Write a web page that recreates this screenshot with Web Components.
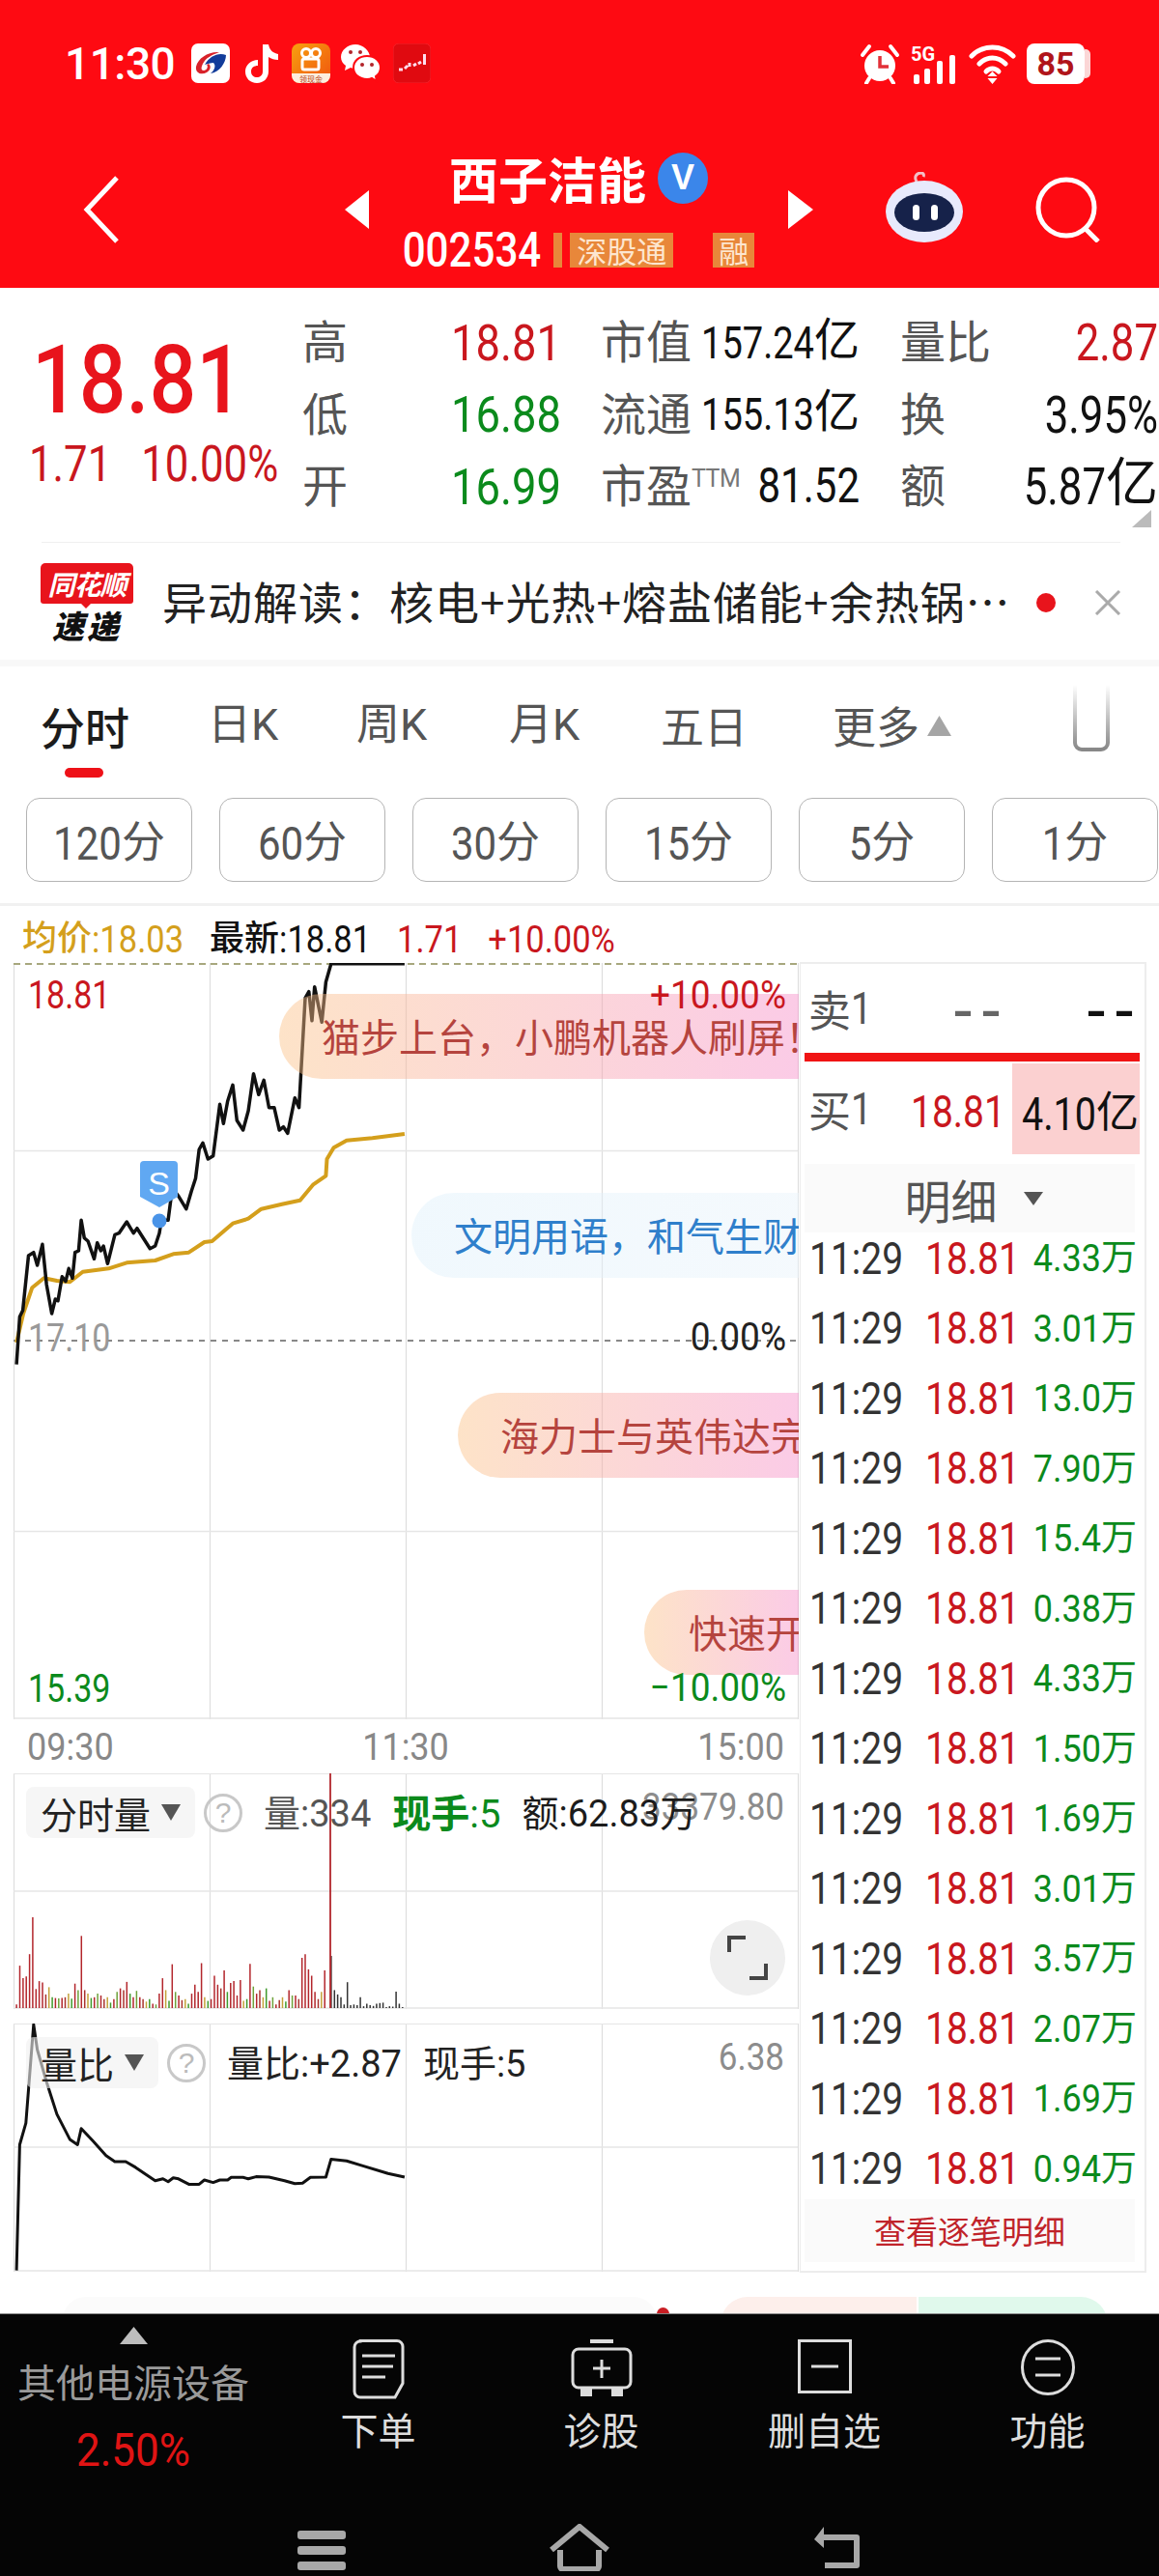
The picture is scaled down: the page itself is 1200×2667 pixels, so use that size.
<!DOCTYPE html>
<html lang="zh">
<head>
<meta charset="utf-8">
<title>西子洁能</title>
<style>
  html, body { margin: 0; padding: 0; background: #fff; }
  body { width: 1200px; height: 2667px; overflow: hidden; font-family: "Noto Sans CJK SC", sans-serif; }
  .main { display: flex; width: 1200px; }
  .left { width: 828px; flex: none; }
</style>
</head>
<body>
<stock-header></stock-header>
<quote-panel></quote-panel>
<news-ticker></news-ticker>
<period-tabs></period-tabs>
<interval-row></interval-row>
<div class="main">
  <div class="left">
    <chart-legend></chart-legend>
    <time-chart></time-chart>
    <axis-row></axis-row>
    <volume-panel></volume-panel>
    <ratio-panel></ratio-panel>
  </div>
  <order-panel></order-panel>
</div>
<peek-strip></peek-strip>
<bottom-dock></bottom-dock>

<script>
const CJK = `"Noto Sans CJK SC", sans-serif`;
const RED = '#c9171e', GREEN = '#0b8a1c', GOLD = '#d49f1c';

// the app's digit font is tall and thin, so digits get stretched upward
const NUM_CSS = `.n { display: inline-block; font-family: Roboto, sans-serif; font-weight: 400; font-size: var(--nf, .81em); transform: scaleY(var(--sy, 1.22)); }`;
const n = s => s.replace(/[\d.:+%−]+/g, m => `<span class="n">${m}</span>`);

class Base extends HTMLElement {
  connectedCallback() {
    if (!this.shadowRoot) this.attachShadow({ mode: 'open' });
    this.shadowRoot.innerHTML = `<style>${NUM_CSS}${this.css()}</style>${this.html()}`;
  }
  css() { return ':host{display:block}'; }
  html() { return ''; }
}

// zoom crops were not square, these put traced points back on the chart
const tracePts = (pts, sy, oy) => pts.map(([x, y]) => `${(x / 1.867).toFixed(1)},${(y / sy + oy).toFixed(1)}`).join(' ');

class StockHeader extends Base {
  css() { return `
    :host { display: block; background: #fe0a12; height: 298px; color: #fff; box-sizing: border-box; }
    .status { height: 157px; box-sizing: border-box; padding: 45px 70px 0 67px; display: flex; align-items: flex-start; }
    .time { font: 500 46px/42px Roboto, sans-serif; width: 111px; letter-spacing: -.5px; }
    svg { display: block; flex: none; }
    .right { margin-left: auto; display: flex; }
    .nav { height: 120px; display: flex; align-items: center; padding-left: 86px; }
    .mid { width: 434px; display: flex; flex-direction: column; align-items: center; }
    .title { display: flex; align-items: center; height: 54px; gap: 12px; font: 700 51px/54px ${CJK}; }
    .v { width: 52px; height: 53px; border-radius: 50%; background: #3b86ea; display: flex; align-items: center; justify-content: center;
         font: 800 36px/36px "Liberation Sans", sans-serif; }
    .code { display: flex; align-items: center; height: 37px; margin-top: 29px; font: 500 52px/37px ${CJK}; --sy: 1.2; }
    .code .n { font-weight: 500; }
    .tag { background: #e8873a; color: #fde6cf; font: 31px/36px ${CJK}; height: 36px; padding: 0 7px; white-space: nowrap; }
    .bar { width: 9px; height: 36px; background: #e8873a; margin: 0 8px 0 13px; }
  `; }
  html() { return `
    <div class="status">
      <div class="time">11:30</div>
      <svg width="40" height="41" viewBox="0 0 40 41" style="margin-left:20px"><rect width="40" height="41" rx="7" fill="#fff"/><path d="M29 9C18 8 7 15 5 24c-1 7 6 9 11 6 4-2 5-7 2-9l-2 1c2 2 0 6-3 6-3 0-3-3-1-7 3-6 9-9 17-12z" fill="#d8222a"/><path d="M14 22c5-9 14-13 22-10 0 8-7 18-16 19 4-3 6-8 3-11-3 0-6 1-9 2z" fill="#123c9a"/></svg>
      <svg width="36" height="41" viewBox="0 0 36 41" style="margin-left:15px"><path d="M19 1h6c1 6 5 9 10 10v6c-4 0-7-1-10-3v15c0 7-5 12-12 12C6 41 1 36 1 29s6-12 13-12v6c-4 0-7 2-7 6s3 6 6 6 6-2 6-6z" fill="#fff"/></svg>
      <svg width="40" height="41" viewBox="0 0 40 41" style="margin-left:13px"><defs><linearGradient id="ks" x1="0" y1="0" x2="1" y2="1"><stop offset="0" stop-color="#f8a10f"/><stop offset="1" stop-color="#f0530f"/></linearGradient></defs><rect width="40" height="41" rx="8" fill="url(#ks)"/><circle cx="15" cy="10" r="4.5" fill="none" stroke="#fff" stroke-width="3"/><circle cx="25" cy="10" r="4.5" fill="none" stroke="#fff" stroke-width="3"/><rect x="11" y="16" width="17" height="11" rx="2" fill="none" stroke="#fff" stroke-width="3"/><path d="M0 31h40v2a8 8 0 0 1-8 8H8a8 8 0 0 1-8-8z" fill="#fdeedd"/><text x="20" y="40" font-size="8" text-anchor="middle" fill="#b5451a" font-family="Noto Sans CJK SC">领现金</text></svg>
      <svg width="41" height="41" viewBox="0 0 41 41" style="margin-left:11px"><path d="M15 1C7 1 0 7 0 14c0 4 2 7 5 9l-1 5 6-3c2 1 4 1 6 1 8 0 14-6 14-12S23 1 15 1z" fill="#fff"/><path d="M27 13c-8 0-14 5-14 12s6 12 14 12c2 0 3 0 5-1l5 3-1-5c3-2 5-5 5-9 0-7-6-12-14-12z" fill="#fff" stroke="#fe0a12" stroke-width="2"/><circle cx="10" cy="9" r="2" fill="#b3242a"/><circle cx="20" cy="9" r="2" fill="#b3242a"/><circle cx="22" cy="22" r="2" fill="#b3242a"/><circle cx="32" cy="22" r="2" fill="#b3242a"/></svg>
      <svg width="39" height="41" viewBox="0 0 39 41" style="margin-left:13px"><rect width="39" height="41" rx="6" fill="#e00a10" stroke="#f4222a"/><path d="M6 27h4M12 26l3-3M17 24v-4M21 23l3-2M26 21l3-2" stroke="#fde" stroke-width="3" fill="none"/><rect x="31" y="11" width="3" height="11" fill="#fde"/></svg>
      <div class="right">
        <svg width="42" height="42" viewBox="0 0 42 42"><path d="M3 12 10 3M39 12 32 3" stroke="#fff" stroke-width="4" stroke-linecap="round"/><path d="M10 36 7 41M32 36l3 5" stroke="#fff" stroke-width="4" stroke-linecap="round"/><circle cx="21" cy="23" r="16" fill="#fff"/><path d="M21 13v11h9" stroke="#e23038" stroke-width="3.5" fill="none"/></svg>
        <svg width="47" height="42" viewBox="0 0 47 42" style="margin-left:11px"><text x="0" y="18" font-size="20" font-weight="700" fill="#fff" font-family="Roboto">5G</text><g fill="#fff"><rect x="3" y="32" width="6" height="10" rx="2"/><rect x="14" y="26" width="6" height="16" rx="2"/><rect x="27" y="18" width="6" height="24" rx="2"/><rect x="40" y="12" width="6" height="30" rx="2"/></g></svg>
        <svg width="49" height="42" viewBox="0 0 49 42" style="margin-left:13px"><g fill="none" stroke="#fff" stroke-width="5" stroke-linecap="round"><path d="M3 13C15 1 34 1 46 13"/><path d="M11 21c8-8 19-8 27 0"/><path d="M18 29c4-4 9-4 13 0"/></g><path d="M24.500 29l5 5h-10zM19.500 36h10l-5 6z" fill="#fff"/></svg>
        <svg width="67" height="42" viewBox="0 0 67 42" style="margin-left:11px"><rect x="0" y="0" width="60" height="42" rx="8" fill="#fff"/><path d="M60 6h1a5 5 0 0 1 5 5v20a5 5 0 0 1-5 5h-1z" fill="#fbd6d6"/><text x="30" y="33" font-size="34" font-weight="700" text-anchor="middle" fill="#b0141a" font-family="Roboto">85</text></svg>
      </div>
    </div>
    <div class="nav">
      <svg width="38" height="70" viewBox="0 0 38 70"><path d="M35 2 4 35l31 33" fill="none" stroke="#fff" stroke-width="5"/></svg>
      <svg width="25" height="40" viewBox="0 0 25 40" style="margin-left:233px"><path d="M25 0v40L0 20z" fill="#fff"/></svg>
      <div class="mid">
        <div class="title">西子洁能<span class="v">V</span></div>
        <div class="code">${n('002534')}<span class="bar"></span><span class="tag">深股通</span><span class="tag" style="margin-left:41px;padding:0 6px">融</span></div>
      </div>
      <svg width="26" height="40" viewBox="0 0 26 40"><path d="M0 0v40l26-20z" fill="#fff"/></svg>
      <svg width="80" height="78" viewBox="0 0 80 78" style="margin-left:75px"><path d="M32 10c-3-5 0-9 5-9 2 0 3 2 2 4" fill="none" stroke="#f3c0c8" stroke-width="3"/><ellipse cx="40" cy="41" rx="40" ry="32" fill="#e8eafc"/><ellipse cx="40" cy="42" rx="31" ry="20" fill="#16224a"/><rect x="28" y="34" width="7" height="16" rx="3.500" fill="#fff"/><rect x="47" y="34" width="7" height="16" rx="3.500" fill="#fff"/></svg>
      <svg width="68" height="68" viewBox="0 0 68 68" style="margin-left:75px"><circle cx="32" cy="32" r="29" fill="none" stroke="#fff" stroke-width="5"/><path d="M52 54l13 13" stroke="#fff" stroke-width="5"/></svg>
    </div>
  `; }
}
customElements.define('stock-header', StockHeader);

class QuoteCell extends Base {
  css() { return `
    :host { display: flex; align-items: center; justify-content: space-between; height: 74px; white-space: nowrap; }
    .l { color: #555; font: 47px/74px ${CJK}; }
    .v { font: var(--vf, 56px)/74px ${CJK}; color: var(--c, #111); }
    sup { font: 25px/25px Roboto, sans-serif; vertical-align: 16px; color: #777; letter-spacing: -.5px; }
  `; }
  html() {
    const sup = this.getAttribute('sup');
    return `<span class="l">${this.getAttribute('label')}${sup ? `<sup>${sup}</sup>` : ''}</span><span class="v">${n(this.getAttribute('value'))}</span>`;
  }
}
customElements.define('quote-cell', QuoteCell);

class QuotePanel extends Base {
  css() { return `
    :host { display: flex; height: 263px; box-sizing: border-box; padding-top: 16px; position: relative; }
    .price { width: 313px; flex: none; color: #e8141c; }
    .big { font: 106px/110px ${CJK}; padding: 8px 0 0 33px; height: 110px; --sy: 1.15; }
    .big .n { font-weight: 500; }
    .sub { display: flex; gap: 31px; padding: 18px 0 0 30px; font: 54px/44px ${CJK}; color: ${RED}; --sy: 1.17; }
    .grid { display: grid; grid-template-columns: 309px 310px 268px; grid-auto-rows: 74.500px; }
    .grid > :nth-child(3n+1) { padding-right: 41px; --sy: 1.14; }
    .grid > :nth-child(3n+2) { padding-right: 42px; --vf: 47px; }
    .grid > :nth-child(3n) { padding-right: 1px; --vf: 54px; }
    .tri { position: absolute; right: 8px; bottom: 15px; }
  `; }
  html() {
    const cells = [
      ['高', '18.81', RED], ['市值', '157.24亿'], ['量比', '2.87', RED],
      ['低', '16.88', GREEN], ['流通', '155.13亿'], ['换', '3.95%'],
      ['开', '16.99', GREEN], ['市盈', '81.52', '#111;--nf:42px;--sy:1.2', 'TTM'], ['额', '5.87亿'],
    ];
    return `
      <div class="price"><div class="big">${n('18.81')}</div><div class="sub"><span>${n('1.71')}</span><span>${n('10.00%')}</span></div></div>
      <div class="grid">${cells.map(([l, v, c, s]) => `<quote-cell label="${l}" value="${v}" ${s ? `sup="${s}"` : ''} style="${c ? `--c:${c}` : ''}"></quote-cell>`).join('')}</div>
      <svg class="tri" width="20" height="18"><path d="M20 0v18H0z" fill="#bbb"/></svg>
    `;
  }
}
customElements.define('quote-panel', QuotePanel);

class NewsTicker extends Base {
  css() { return `
    :host { display: block; height: 129px; box-sizing: border-box; position: relative; border-bottom: 7px solid #f8f8f8; }
    .line { height: 1px; background: #f0f0f0; margin: 0 40px 0 43px; }
    .row { display: flex; align-items: center; padding: 20px 0 0 42px; height: 84px; }
    .logo { width: 96px; flex: none; display: flex; flex-direction: column; align-items: center; }
    .red { width: 96px; height: 42px; background: #e8141c; border-radius: 5px 5px 3px 3px; color: #fff; font: italic 700 28px/42px ${CJK}; text-align: center; position: relative; white-space: nowrap; letter-spacing: -1px; }
    .red::after { content: ""; position: absolute; left: 40px; top: 40px; border: 7px solid transparent; border-top-color: #e8141c; }
    .sd { font: italic 900 33px/38px ${CJK}; color: #111; margin-top: 3px; letter-spacing: 3px; }
    .txt { margin-left: 30px; font: 46px/60px ${CJK}; color: #222; white-space: nowrap; width: 884px; letter-spacing: 1px; padding-bottom: 6px; }
    .dot { width: 20px; height: 20px; border-radius: 50%; background: #e8141c; margin-left: 21px; flex: none; }
    svg { margin-left: 40px; flex: none; }
  `; }
  html() { return `
    <div class="line"></div>
    <div class="row">
      <div class="logo"><div class="red">同花顺</div><div class="sd">速递</div></div>
      <div class="txt">异动解读：核电+光热+熔盐储能+余热锅…</div>
      <span class="dot"></span>
      <svg width="28" height="26" viewBox="0 0 28 26"><path d="M2 1l24 24M26 1 2 25" stroke="#aaa" stroke-width="3"/></svg>
    </div>
  `; }
}
customElements.define('news-ticker', NewsTicker);

class PeriodTabs extends Base {
  css() { return `
    :host { display: grid; grid-template-columns: 173px 154px 158px 157px 178px 248px auto; height: 136px; box-sizing: border-box; padding: 31px 0 0 42px; position: relative; color: #555; font: 45px/60px ${CJK}; }
    .on { color: #1c1c1c; font-weight: 500; font-size: 46px; position: relative; }
    .on::after { content: ""; position: absolute; left: 25px; top: 74px; width: 40px; height: 10px; border-radius: 5px; background: #ee1118; }
    .k { font-family: "Roboto", ${CJK}; }
    .more { display: flex; align-items: center; gap: 8px; height: 60px; }
    svg { display: block; }
  `; }
  html() { return `
    <div class="on">分时</div><div class="k">日K</div><div class="k">周K</div><div class="k">月K</div><div>五日</div>
    <div class="more">更多<svg width="25" height="21"><path d="M12.500 0 25 21H0z" fill="#a5a5a5"/></svg></div>
    <svg width="40" height="72" viewBox="0 0 40 72" style="margin-top:-14px"><defs><linearGradient id="u" x1="0" y1="0" x2="0" y2="1"><stop offset="0" stop-color="#888" stop-opacity="0"/><stop offset="1" stop-color="#888"/></linearGradient></defs><path d="M3 2v60a7 7 0 0 0 7 7h20a7 7 0 0 0 7-7V2" fill="none" stroke="url(#u)" stroke-width="4"/></svg>
  `; }
}
customElements.define('period-tabs', PeriodTabs);

class IntervalRow extends Base {
  css() { return `
    :host { display: flex; gap: 28px; height: 112px; box-sizing: border-box; padding-left: 27px; border-bottom: 3px solid #f1f1f1; overflow: hidden; --nf: 42px; --sy: 1.13; }
    div { width: 172px; height: 87px; flex: none; box-sizing: border-box; border: 1.500px solid #b4b4b4; border-radius: 14px; text-align: center; color: #555; font: 45px/84px ${CJK}; }
  `; }
  html() { return ['120分', '60分', '30分', '15分', '5分', '1分'].map(t => `<div>${n(t)}</div>`).join(''); }
}
customElements.define('interval-row', IntervalRow);

class ChartLegend extends Base {
  css() { return `
    :host { display: flex; height: 59px; box-sizing: border-box; padding: 8px 0 0 23px; font: 36px/44px ${CJK}; white-space: nowrap; --nf: 34.5px; --sy: 1.13; }
    span.g { margin-right: 27px; }
  `; }
  html() { return `
    <span class="g" style="color:${GOLD};font-weight:500">${n('均价:18.03')}</span>
    <span class="g" style="color:#111;font-weight:500">${n('最新:18.81')}</span>
    <span class="g" style="color:${RED}">${n('1.71')}</span>
    <span class="g" style="color:${RED}">${n('+10.00%')}</span>
  `; }
}
customElements.define('chart-legend', ChartLegend);

const PRICE = [
  [32,578],[38,430],[44,410],[55,240],[65,230],[72,270],[82,205],[90,330],[100,420],[107,375],[112,380],[120,305],[127,320],[133,280],[140,310],[145,230],[152,225],[157,130],[163,185],[170,195],[182,250],[188,200],[195,225],[200,210],[208,265],[222,175],[230,170],[245,135],[258,170],[265,155],[290,218],[300,210],[308,170],[312,130],[325,130],[333,30],[345,55],[360,95],[370,40],[378,0]
];
const PRICE_TOP = [
  [385,1470],[392,1450],[402,1500],[412,1490],[425,1330],[432,1390],[440,1320],[450,1270],[458,1380],[470,1410],[480,1350],[490,1235],[500,1300],[510,1255],[520,1340],[530,1340],[540,1410],[548,1400],[556,1420],[570,1310],[578,1340],[590,1000],[597,980],[603,1070],[608,965],[622,1075],[630,950],[640,893],[782,893]
];
const AVG = [
  [32,510],[45,420],[62,340],[85,310],[110,318],[135,322],[160,290],[210,280],[245,262],[300,255],[335,235],[365,230],[395,198],[410,195],[450,140],[480,125],[505,95],[545,80],[580,68],[605,20],[630,-8]
];
const AVG_TOP = [[632,1500],[645,1465],[670,1442],[720,1435],[782,1422]];
const GRID_X = [14.5, 217.5, 420.5, 623.5, 826.5];
const GRID_C = '#dedede';

class TimeChart extends Base {
  css() { return `
    :host { display: block; position: relative; height: 783px; width: 828px; overflow: hidden; --nf: 34px; --sy: 1.17; }
    svg { position: absolute; left: 0; top: 0; }
    .banner { position: absolute; right: 1px; height: 88px; border-radius: 44px 0 0 44px; box-sizing: border-box; padding-left: 44px; overflow: hidden; white-space: nowrap; font: 40px/86px ${CJK}; color: #b5443e; }
    .warm { background: linear-gradient(90deg, rgba(251,193,133,.45), rgba(246,140,200,.45)); }
    .cool { background: linear-gradient(90deg, rgba(222,240,251,.45), rgba(232,243,251,.45)); color: #2f7fcb; }
    .lb { position: absolute; line-height: 36px; white-space: nowrap; }
    .r { right: 14px; --nf: 37px; --sy: 1.08; }
  `; }
  html() {
    return `
      <svg width="828" height="783" viewBox="0 0 828 783">
        ${GRID_X.map(x => `<line x1="${x}" x2="${x}" y1="0" y2="783" stroke="${GRID_C}" stroke-width="1.200"/>`).join('')}
        <line x1="14" x2="826" y1="194.500" y2="194.500" stroke="#e6e6e6" stroke-width="1.500"/>
        <line x1="14" x2="826" y1="588.500" y2="588.500" stroke="#e6e6e6" stroke-width="1.500"/>
        <line x1="14" x2="826" y1="782" y2="782" stroke="#e4e4e4" stroke-width="1.500"/>
        <line x1="14" x2="826" y1="1" y2="1" stroke="#a8a87e" stroke-width="2" stroke-dasharray="7 5"/>
        <line x1="14" x2="826" y1="391" y2="391" stroke="#888" stroke-width="2" stroke-dasharray="6 6"/>
        <polyline fill="none" stroke="${GOLD}" stroke-width="4" stroke-linejoin="round" points="${tracePts(AVG, 3, 223)} ${tracePts(AVG_TOP, 3, -297)}"/>
        <polyline fill="none" stroke="#111" stroke-width="3.500" stroke-linejoin="round" points="${tracePts(PRICE, 3, 223)} ${tracePts(PRICE_TOP, 3, -297)}"/>
        <circle cx="165" cy="267" r="7.500" fill="#4a94e8"/>
        <path d="M149 205h31a4 4 0 0 1 4 4v33l-19 11-20-11v-33a4 4 0 0 1 4-4z" fill="#60a8f2"/>
        <text x="164.500" y="240" text-anchor="middle" font-size="34" fill="#fff" font-family="Liberation Sans, sans-serif">S</text>
      </svg>
      <div class="banner warm" style="top:32px;width:538px">猫步上台，小鹏机器人刷屏！</div>
      <div class="banner cool" style="top:238px;width:401px">文明用语，和气生财</div>
      <div class="banner warm" style="top:445px;width:353px">海力士与英伟达完成</div>
      <div class="banner warm" style="top:649px;width:160px;padding-left:46px">快速开盘</div>
      <span class="lb" style="left:29px;top:15px;color:${RED}">${n('18.81')}</span>
      <span class="lb r" style="top:16px;color:${RED}">${n('+10.00%')}</span>
      <span class="lb" style="left:29px;top:370px;color:#999">${n('17.10')}</span>
      <span class="lb r" style="top:370px;color:#222">${n('0.00%')}</span>
      <span class="lb" style="left:29px;top:733px;color:${GREEN}">${n('15.39')}</span>
      <span class="lb r" style="top:733px;color:${GREEN}">${n('−10.00%')}</span>
    `;
  }
}
customElements.define('time-chart', TimeChart);

class AxisRow extends Base {
  css() { return `
    :host { display: flex; justify-content: space-between; height: 56px; box-sizing: border-box; padding: 11px 16px 0 28px; color: #888; line-height: 36px; --nf: 36px; --sy: 1.1; }
  `; }
  html() { return `<span>${n('09:30')}</span><span>${n('11:30')}</span><span>${n('15:00')}</span>`; }
}
customElements.define('axis-row', AxisRow);

class PanelHead extends Base {
  css() { return `
    :host { display: flex; align-items: center; position: absolute; left: 27px; top: 14px; height: 53px; white-space: nowrap; font: 38px/53px ${CJK}; --nf: 38px; --sy: 1.02; }
    .pill { display: flex; align-items: center; height: 53px; background: rgba(240,240,240,.6); border-radius: 8px; padding: 0 15px; color: #222; gap: 11px; }
    svg { display: block; flex: none; }
    .q { margin-left: 9px; width: 40px; height: 40px; box-sizing: border-box; border: 3px solid #c8c8c8; border-radius: 50%; color: #bbb; text-align: center; font: 30px/34px "Liberation Sans", sans-serif; }
    ::slotted(span) { margin-left: 22px; }
  `; }
  html() { return `
    <div class="pill">${this.getAttribute('name')}<svg width="20" height="17"><path d="M0 0h20L10 17z" fill="#555"/></svg></div>
    <div class="q">?</div><slot></slot>
  `; }
}
customElements.define('panel-head', PanelHead);

// heights read off the crop, in crop pixels
const VOL = [10,118,83,88,150,253,53,75,71,38,58,30,28,27,28,30,40,26,68,50,201,50,40,28,30,40,35,25,30,15,25,45,55,50,73,40,30,48,30,25,18,25,12,10,40,83,50,20,122,45,35,22,25,12,40,65,45,125,30,20,25,90,65,55,105,45,70,75,35,78,20,25,123,60,40,50,30,55,20,30,10,22,30,18,50,35,35,25,140,150,108,90,45,25,45,105,0,145,50,38,30,10,72,8,10,8,30,5,12,8,6,12,14,15,3,5,4,46,12,3];

class VolumePanel extends Base {
  css() { return `
    :host { display: block; position: relative; height: 244px; width: 828px; }
    svg { position: absolute; left: 0; top: 0; }
    .tip { position: absolute; right: 16px; top: 18px; line-height: 36px; color: #8c8c8c; --nf: 35px; --sy: 1.1; }
    .fs { position: absolute; left: 735px; top: 152px; width: 78px; height: 78px; border-radius: 50%; background: #efefef; display: flex; align-items: center; justify-content: center; }
  `; }
  html() {
    const cols = ['#b3262c', '#6ea23a', '#b3262c', '#a9332e', '#c4a23a', '#3f9a2c'];
    const bars = VOL.map((h, i) => {
      const x = ((32 + 6.27 * i) / 1.867).toFixed(1);
      const c = i >= 97 ? '#333' : (h > 60 ? '#b3262c' : cols[i % 6]);
      return `<line x1="${x}" x2="${x}" y1="243" y2="${(243 - h / 2.69).toFixed(1)}" stroke="${c}" stroke-width="1.500"/>`;
    }).join('');
    return `
      <svg width="828" height="244" viewBox="0 0 828 244">
        ${GRID_X.map(x => `<line x1="${x}" x2="${x}" y1="0" y2="244" stroke="${GRID_C}" stroke-width="1.200"/>`).join('')}
        <line x1="14" x2="826" y1="0.500" y2="0.500" stroke="#e6e6e6"/>
        <line x1="14" x2="826" y1="122" y2="122" stroke="#e6e6e6" stroke-width="1.500"/>
        <line x1="14" x2="826" y1="243" y2="243" stroke="#e6e6e6" stroke-width="1.500"/>
        ${bars}
        <line x1="342" x2="342" y1="0" y2="243" stroke="#b3262c" stroke-width="1.800"/>
      </svg>
      <span class="tip">${n('33379.80')}</span>
      <panel-head name="分时量">
        <span style="color:#555">${n('量:334')}</span>
        <span style="color:${GREEN};font-weight:700;font-size:40px;--nf:40px">${n('现手:5')}</span>
        <span style="color:#1c1c1c">${n('额:62.83万')}</span>
      </panel-head>
      <div class="fs"><svg style="position:static" width="42" height="46" viewBox="0 0 42 46"><path d="M2 17V2h17M40 29v15H23" fill="none" stroke="#444" stroke-width="4"/></svg></div>
    `;
  }
}
customElements.define('volume-panel', VolumePanel);

const RATIO = [[32,1535],[38,1185],[50,1125],[65,850],[72,920],[90,1010],[110,1100],[135,1170],[150,1185],[157,1140],[180,1175],[205,1215],[222,1232],[243,1232],[262,1248],[300,1285],[315,1280],[325,1288],[335,1277],[345,1280],[365,1295],[385,1295],[395,1283],[412,1290],[425,1283],[440,1283],[447,1276],[470,1276],[480,1280],[495,1274],[520,1275],[550,1285],[570,1293],[585,1292],[600,1276],[630,1275],[640,1225],[670,1230],[700,1243],[750,1265],[782,1275]];

class RatioPanel extends Base {
  css() { return `
    :host { display: block; position: relative; height: 257px; width: 828px; margin-top: 15px; }
    svg { position: absolute; left: 0; top: 0; }
    .tip { position: absolute; right: 16px; top: 18px; line-height: 36px; color: #8c8c8c; --nf: 35px; --sy: 1.1; }
  `; }
  html() { return `
    <svg width="828" height="257" viewBox="0 0 828 257">
      ${GRID_X.map(x => `<line x1="${x}" x2="${x}" y1="0" y2="257" stroke="${GRID_C}" stroke-width="1.200"/>`).join('')}
      <line x1="14" x2="826" y1="0.500" y2="0.500" stroke="#e6e6e6"/>
      <line x1="14" x2="826" y1="128" y2="128" stroke="#e6e6e6" stroke-width="1.500"/>
      <line x1="14" x2="826" y1="256" y2="256" stroke="#e6e6e6" stroke-width="1.500"/>
      <polyline fill="none" stroke="#111" stroke-width="3" stroke-linejoin="round" points="${tracePts(RATIO, 2.69, -315)}"/>
    </svg>
    <span class="tip">${n('6.38')}</span>
    <panel-head name="量比">
      <span style="color:#222">${n('量比:+2.87')}</span>
      <span style="color:#222">${n('现手:5')}</span>
    </panel-head>
  `; }
}
customElements.define('ratio-panel', RatioPanel);

class OrderPanel extends Base {
  css() { return `
    :host { display: block; width: 372px; flex: none; box-sizing: border-box; padding-top: 58px; --nf: 39px; --sy: 1.2; }
    .box { width: 359px; height: 1357px; box-sizing: border-box; border: solid #ededed; border-width: 2px 2px 2px 1px; padding-left: 4px; position: relative; }
    .ask, .bid { display: flex; align-items: center; white-space: nowrap; font: 44px/60px ${CJK}; color: #555; }
    .ask { height: 92px; padding-left: 4px; }
    .ask b { font: 66px/40px "Liberation Sans", sans-serif; letter-spacing: 7px; }
    .rule { height: 9px; width: 347px; background: #f01414; }
    .bid { height: 94px; padding-left: 4px; margin-top: 2px; position: relative; }
    .bid .p { position: absolute; left: 110px; color: ${RED}; }
    .bid .vol { position: absolute; left: 215px; width: 132px; height: 94px; background: #fbd0d0; color: #111; font-size: 44px; line-height: 94px; text-align: right; box-sizing: border-box; padding-right: 1px; --nf: 39.500px; }
    .head { height: 71px; margin: 10px 5px 0 0; width: 342px; background: #fafafa; display: flex; align-items: center; justify-content: center; gap: 27px; color: #555; font: 48px/60px ${CJK}; padding-left: 8px; box-sizing: border-box; margin-bottom: -13px; }
    .tr { display: grid; grid-template-columns: 120px 94px 125px; height: 72.540px; position: relative; padding-left: 5px; font: 38px/72px ${CJK}; align-items: center; white-space: nowrap; }
    .tr > :first-child { color: #333; }
    .tr > :nth-child(2) { color: ${RED}; }
    .tr > :last-child { color: ${GREEN}; text-align: right; font-size: 37px; --nf: 36px; --sy: 1.1; }
    .more { width: 342px; height: 65px; background: #fafafa; text-align: center; font: 33px/65px ${CJK}; color: #c0232a; margin-top: -1px; }
  `; }
  html() {
    const vols = ['4.33', '3.01', '13.0', '7.90', '15.4', '0.38', '4.33', '1.50', '1.69', '3.01', '3.57', '2.07', '1.69', '0.94'];
    return `<div class="box">
      <div class="ask">卖${n('1')}<b style="position:absolute;left:157px;color:#666">--</b><b style="position:absolute;left:295px;color:#111">--</b></div>
      <div class="rule"></div>
      <div class="bid">买${n('1')}<span class="p">${n('18.81')}</span><span class="vol">${n('4.10亿')}</span></div>
      <div class="head">明细<svg width="20" height="14"><path d="M0 0h20L10 14z" fill="#555"/></svg></div>
      ${vols.map(v => `<div class="tr"><div>${n('11:29')}</div><div>${n('18.81')}</div><div>${n(v + '万')}</div></div>`).join('')}
      <div class="more">查看逐笔明细</div>
    </div>`;
  }
}
customElements.define('order-panel', OrderPanel);

class PeekStrip extends Base {
  css() { return `
    :host { display: block; position: relative; height: 42px; overflow: hidden; }
    div { position: absolute; top: 25px; height: 40px; }
    .a { left: 65px; width: 615px; background: #fbfbfb; border-radius: 24px 24px 0 0; }
    .d { left: 680px; top: 36px; width: 13px; height: 13px; border-radius: 50%; background: #c81e24; }
    .p { left: 746px; width: 203px; background: #fdefeb; border-radius: 28px 0 0 0; }
    .g { left: 951px; width: 196px; background: #e0f9ec; border-radius: 0 28px 0 0; }
  `; }
  html() { return `<div class="a"></div><div class="d"></div><div class="p"></div><div class="g"></div>`; }
}
customElements.define('peek-strip', PeekStrip);

class DockItem extends Base {
  css() { return `
    :host { display: flex; flex-direction: column; align-items: center; padding-top: 26px; color: #ddd; font: 39px/44px ${CJK}; }
    .ic { height: 68px; display: flex; align-items: flex-start; }
    .t { margin-top: 2px; white-space: nowrap; }
  `; }
  html() { return `<div class="ic"><slot></slot></div><div class="t">${this.getAttribute('label')}</div>`; }
}
customElements.define('dock-item', DockItem);

class BottomDock extends Base {
  css() { return `
    :host { display: block; background: #050505; height: 273px; border-top: 1px solid #888; box-sizing: border-box; }
    .top { display: grid; grid-template-columns: 276px repeat(4, 231px); height: 205px; }
    .sector { display: flex; flex-direction: column; align-items: center; padding-top: 13px; }
    .name { font: 40px/44px ${CJK}; color: #9a9a9a; margin-top: 16px; white-space: nowrap; }
    .pct { font: 44px/44px ${CJK}; color: #e01414; margin-top: 24px; --nf: 44px; --sy: 1.08; }
    .keys { display: flex; height: 67px; position: relative; }
    svg { display: block; }
  `; }
  html() { return `
    <div class="top">
      <div class="sector">
        <svg width="29" height="18"><path d="M14.500 0 29 18H0z" fill="#bdbdbd"/></svg>
        <div class="name">其他电源设备</div>
        <div class="pct">${n('2.50%')}</div>
      </div>
      <dock-item label="下单"><svg width="54" height="62" viewBox="0 0 54 62"><path d="M8 1.500h38a6 6 0 0 1 6 6v38l-8 14.500H8a6 6 0 0 1-6-6v-46a6 6 0 0 1 6-6z" fill="none" stroke="#ddd" stroke-width="3"/><path d="M10 17h34M10 28h32M10 39h24" stroke="#ddd" stroke-width="3"/></svg></dock-item>
      <dock-item label="诊股"><svg width="64" height="60" viewBox="0 0 64 60"><path d="M20 2h24" stroke="#ddd" stroke-width="4"/><rect x="2" y="10" width="60" height="40" rx="6" fill="none" stroke="#ddd" stroke-width="3"/><path d="M32 21v19M23 30h18" stroke="#ddd" stroke-width="3"/><path d="M10 51h12v8H10zM42 51h12v8H42z" fill="#ddd"/></svg></dock-item>
      <dock-item label="删自选"><svg width="56" height="56" viewBox="0 0 56 56"><rect x="1.500" y="1.500" width="53" height="53" fill="none" stroke="#ddd" stroke-width="3"/><path d="M14 28h28" stroke="#ddd" stroke-width="3"/></svg></dock-item>
      <dock-item label="功能"><svg width="56" height="58" viewBox="0 0 56 58"><ellipse cx="28" cy="29" rx="26.500" ry="27.500" fill="none" stroke="#ddd" stroke-width="3"/><path d="M15 20h26M15 37h26" stroke="#ddd" stroke-width="3"/></svg></dock-item>
    </div>
    <div class="keys">
      <svg style="margin:19px 0 0 308px" width="50" height="41" viewBox="0 0 50 41"><g fill="#a8a8a8"><rect width="50" height="9" rx="3"/><rect y="16" width="50" height="9" rx="3"/><rect y="32" width="50" height="9" rx="3"/></g></svg>
      <svg style="margin:12px 0 0 210px" width="64" height="49" viewBox="0 0 64 49"><path d="M3 27 32 3l29 24" fill="none" stroke="#a8a8a8" stroke-width="6"/><path d="M12 27v17a3 3 0 0 0 3 3h34a3 3 0 0 0 3-3V27" fill="none" stroke="#a8a8a8" stroke-width="6"/></svg>
      <svg style="margin:14px 0 0 208px" width="53" height="46" viewBox="0 0 53 46"><path d="M3 14 13 1v8h34a3 3 0 0 1 3 3v29a3 3 0 0 1-3 3H14v-6h30V15H13v8z" fill="#a8a8a8"/></svg>
    </div>
  `; }
}
customElements.define('bottom-dock', BottomDock);
</script>
</body>
</html>
